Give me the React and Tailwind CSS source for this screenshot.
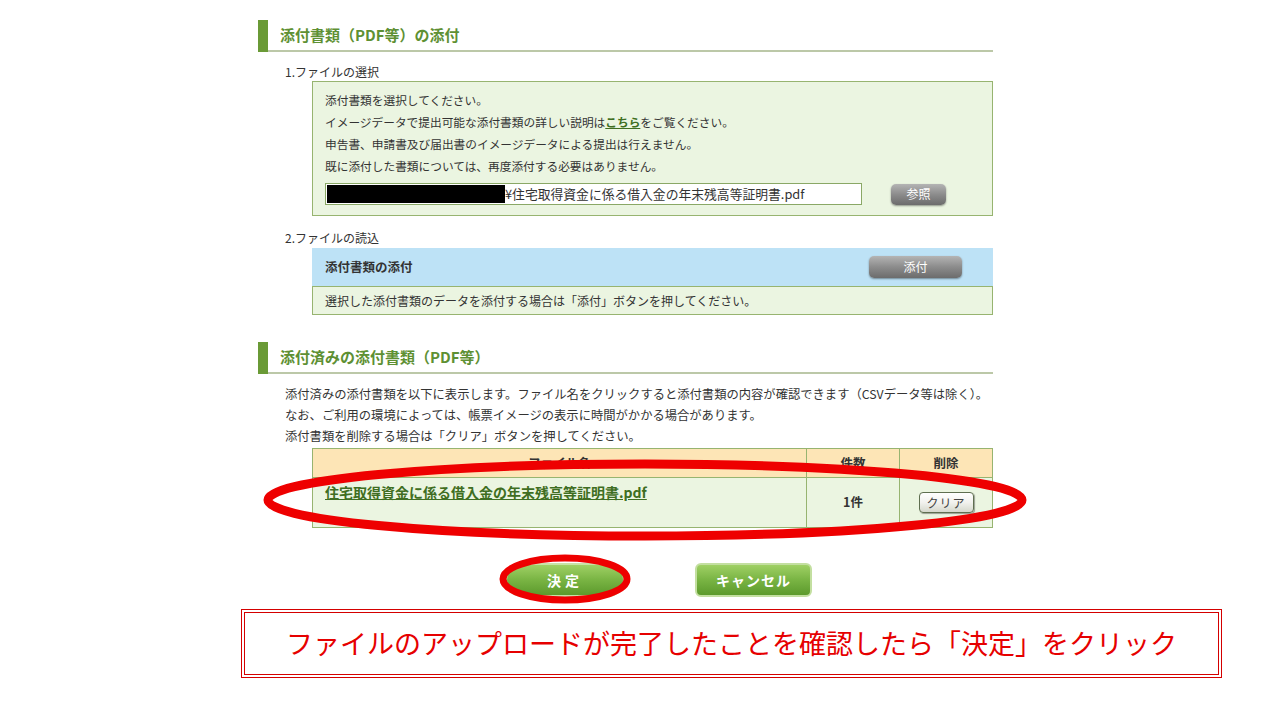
import React from "react";

const font = { fontFamily: '"Noto Sans CJK JP", "Noto Sans", sans-serif' };

function SectionHeader({ title }) {
  return (
    <div className="flex h-[32px]">
      <div className="w-[10px] bg-[#6a9a36]" />
      <div className="flex flex-1 items-center border-b-2 border-[#bcc8a8] pl-[12px] text-[15px] font-bold text-[#5e9033]">
        {title}
      </div>
    </div>
  );
}

function GrayButton({ label, className }) {
  return (
    <div
      className={`flex items-center justify-center rounded-[5px] bg-gradient-to-b from-[#b4b4b4] via-[#8c8c8c] to-[#6c6c6c] text-[12px] text-white shadow-[0_1px_2px_rgba(0,0,0,0.4)] ${className}`}
    >
      {label}
    </div>
  );
}

export default function App() {
  return (
    <div className="relative h-[720px] w-[1280px] overflow-hidden bg-white text-[#333]" style={font}>
      <div className="ml-[258px] w-[735px] pt-[20px]">
        <SectionHeader title="添付書類（PDF等）の添付" />

        <div className="mt-[11px] pl-[27px] text-[12px] leading-[18px]">1.ファイルの選択</div>

        <div className="ml-[54px] h-[135px] border border-[#97b470] bg-[#ebf5e1] pl-[12px] pt-[7px]">
          <div className="text-[11.7px] leading-[22px]">
            <p>添付書類を選択してください。</p>
            <p>
              イメージデータで提出可能な添付書類の詳しい説明は
              <span className="font-bold text-[#3f6e22] underline">こちら</span>
              をご覧ください。
            </p>
            <p>申告書、申請書及び届出書のイメージデータによる提出は行えません。</p>
            <p>既に添付した書類については、再度添付する必要はありません。</p>
          </div>
          <div className="mt-[6px] flex items-center">
            <div className="flex h-[22px] w-[537px] items-center border border-[#8aa866] bg-white pl-[1px] text-[12.8px]">
              <div className="h-[18px] w-[178px] bg-black" />
              <span>¥住宅取得資金に係る借入金の年末残高等証明書.pdf</span>
            </div>
            <GrayButton label="参照" className="ml-[29px] h-[21px] w-[55px]" />
          </div>
        </div>

        <div className="mt-[13px] pl-[27px] text-[12px] leading-[18px]">2.ファイルの読込</div>

        <div className="ml-[54px] mt-[1px]">
          <div className="flex h-[38px] items-center justify-between bg-[#bde2f6] pl-[13px] pr-[31px]">
            <span className="text-[12.5px] font-bold">添付書類の添付</span>
            <GrayButton label="添付" className="h-[22px] w-[93px]" />
          </div>
          <div className="flex h-[29px] items-center border border-[#97b470] bg-[#ebf5e1] pl-[12px] text-[12px]">
            選択した添付書類のデータを添付する場合は「添付」ボタンを押してください。
          </div>
        </div>

        <div className="mt-[27px]">
          <SectionHeader title="添付済みの添付書類（PDF等）" />
        </div>

        <div className="mt-[10px] pl-[27px] text-[12.3px] leading-[21px]">
          <p>添付済みの添付書類を以下に表示します。ファイル名をクリックすると添付書類の内容が確認できます（CSVデータ等は除く）。</p>
          <p>なお、ご利用の環境によっては、帳票イメージの表示に時間がかかる場合があります。</p>
          <p>添付書類を削除する場合は「クリア」ボタンを押してください。</p>
        </div>

        <div className="ml-[54px] mt-[1px] border border-[#97b470]">
          <div className="flex h-[28px] bg-[#fde5b6] text-[12.5px] font-bold">
            <div className="flex w-[493px] items-center justify-center">ファイル名</div>
            <div className="flex w-[93px] items-center justify-center border-l border-[#97b470]">件数</div>
            <div className="flex flex-1 items-center justify-center border-l border-[#97b470]">削除</div>
          </div>
          <div className="flex h-[50px] border-t border-[#97b470] bg-[#ebf5e1]">
            <div className="w-[493px] pl-[12px] pt-[4px] text-[14px] font-bold text-[#3f6e22] underline">
              住宅取得資金に係る借入金の年末残高等証明書.pdf
            </div>
            <div className="flex w-[93px] items-center justify-center border-l border-[#97b470] text-[12.5px] font-bold">
              1件
            </div>
            <div className="flex flex-1 items-center justify-center border-l border-[#97b470]">
              <div className="flex h-[21px] w-[55px] items-center justify-center rounded-[4px] border border-[#5f6f50] bg-gradient-to-b from-white via-[#f2f2ee] to-[#d5d8cc] text-[12px] tracking-[1px] text-[#444] shadow-[1px_1px_1px_rgba(0,0,0,0.35)]">
                クリア
              </div>
            </div>
          </div>
        </div>

        <div className="mt-[35px] flex pl-[247px]">
          <div className="flex h-[34px] w-[120px] items-center justify-center rounded-[17px] border-2 border-[#c8e2a6] bg-gradient-to-b from-[#9fd064] via-[#79b443] to-[#5c9a2c] text-[14px] font-bold tracking-[4px] text-white">
            決定
          </div>
          <div className="ml-[70px] flex h-[34px] w-[117px] items-center justify-center rounded-[6px] border-2 border-[#c3dfa0] bg-gradient-to-b from-[#9fd064] via-[#79b443] to-[#5c9a2c] text-[14px] font-bold tracking-[1px] text-white">
            キャンセル
          </div>
        </div>
      </div>

      <div className="ml-[241px] mt-[12px] flex h-[69px] w-[981px] items-center justify-center border-[4px] border-double border-[#d40000]">
        <span className="text-[27px] text-[#e60000]">
          ファイルのアップロードが完了したことを確認したら「決定」をクリック
        </span>
      </div>

      <svg className="pointer-events-none absolute inset-0" width="1280" height="720">
        <ellipse cx="645" cy="500" rx="377" ry="36" fill="none" stroke="#ee0000" strokeWidth="9" />
        <ellipse cx="565" cy="579" rx="62" ry="21" fill="none" stroke="#ee0000" strokeWidth="7" />
      </svg>
    </div>
  );
}
